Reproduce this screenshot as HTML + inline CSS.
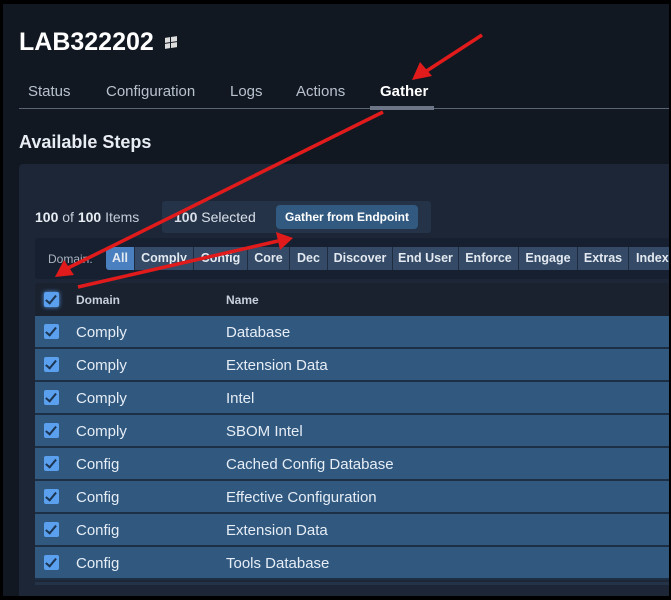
<!DOCTYPE html>
<html><head><meta charset="utf-8"><style>
*{box-sizing:border-box;margin:0;padding:0}
body{width:671px;height:600px;background:#000;font-family:"Liberation Sans",sans-serif;overflow:hidden;position:relative}
.app{position:absolute;left:3px;top:4px;width:666px;height:592px;background:#121821;overflow:hidden}
.abs{position:absolute}
.title{left:16px;top:24px;color:#fff;font-size:25px;font-weight:bold}
.tab{top:79px;color:#b8c2cf;font-size:15px}
.panel{left:16px;top:160px;width:660px;height:440px;background:#1c2636;border-radius:4px}
.chip{position:absolute;top:243px;height:23px;background:#344a66;color:#e3e9f0;font-size:12.5px;font-weight:bold;line-height:23px;text-align:center;border-right:1px solid #1f2c3d}
.row{position:absolute;left:32px;width:640px;height:33px;background:#315980;border-bottom:2px solid #1d2f45;color:#e6edf5;font-size:15px}
.cb{position:absolute;left:9px;top:8px;width:15px;height:15px;background:#5aa0ef;border-radius:2px}
.cb:after{content:"";position:absolute;left:4px;top:1px;width:4px;height:9px;border:solid #1d3550;border-width:0 2px 2px 0;transform:rotate(40deg)}
.row .d{position:absolute;left:41px;top:8px}
.row .n{position:absolute;left:191px;top:8px}
</style></head><body>
<div class="app">
<div class="abs title">LAB322202</div>
<svg class="abs" style="left:161px;top:31px" width="14" height="14" viewBox="0 0 14 14"><g fill="#ddd" transform="skewY(-8) translate(0,2)"><rect x="1" y="1" width="5" height="5"/><rect x="7" y="1" width="6" height="5"/><rect x="1" y="7" width="5" height="5"/><rect x="7" y="7" width="6" height="5"/></g></svg>
<div class="abs tab" style="left:25px">Status</div>
<div class="abs tab" style="left:103px">Configuration</div>
<div class="abs tab" style="left:227px">Logs</div>
<div class="abs tab" style="left:293px">Actions</div>
<div class="abs tab" style="left:377px;color:#fff;font-weight:bold">Gather</div>
<div class="abs" style="left:16px;top:104px;width:660px;height:1px;background:#5b6575"></div>
<div class="abs" style="left:367px;top:102px;width:64px;height:4px;background:#6c7686"></div>
<div class="abs" style="left:16px;top:128px;color:#e8edf3;font-size:18px;font-weight:bold">Available Steps</div>
<div class="abs panel"></div>
<div class="abs" style="left:32px;top:205px;color:#c3ccd8;font-size:14px"><b style="color:#e8edf3">100</b> of <b style="color:#e8edf3">100</b> Items</div>
<div class="abs" style="left:159px;top:197px;width:269px;height:32px;background:#243347;border-radius:3px"></div>
<div class="abs" style="left:171px;top:205px;color:#d9e0ea;font-size:14px"><b>100</b> Selected</div>
<div class="abs" style="left:273px;top:201px;width:142px;height:24px;background:#325a80;border-radius:4px;color:#fff;font-size:12px;font-weight:bold;line-height:24px;text-align:center">Gather from Endpoint</div>
<div class="abs" style="left:32px;top:234px;width:640px;height:41px;background:#172030;border-radius:3px"></div>
<div class="abs" style="left:45px;top:248px;color:#aab4c0;font-size:12px">Domain:</div>
<div class="chip" style="left:103px;width:29px;background:#4a80bf;border-radius:3px 0 0 3px">All</div>
<div class="chip" style="left:132px;width:59px">Comply</div>
<div class="chip" style="left:191px;width:54px">Config</div>
<div class="chip" style="left:245px;width:42px">Core</div>
<div class="chip" style="left:287px;width:38px">Dec</div>
<div class="chip" style="left:325px;width:65px">Discover</div>
<div class="chip" style="left:390px;width:66px">End User</div>
<div class="chip" style="left:456px;width:60px">Enforce</div>
<div class="chip" style="left:516px;width:59px">Engage</div>
<div class="chip" style="left:575px;width:51px">Extras</div>
<div class="chip" style="left:626px;width:50px;text-align:left;padding-left:7px">Index</div>
<div class="abs" style="left:32px;top:279px;width:640px;height:33px;background:#1a2230;border-radius:3px 3px 0 0"></div>
<div class="abs cb" style="left:41px;top:288px;box-shadow:0 0 4px #5aa0ef"></div>
<div class="abs" style="left:73px;top:289px;color:#c8d0db;font-size:12px;font-weight:bold">Domain</div>
<div class="abs" style="left:223px;top:289px;color:#c8d0db;font-size:12px;font-weight:bold">Name</div>
<div class="row" style="top:312px"><div class="cb"></div><span class="d">Comply</span><span class="n">Database</span></div>
<div class="row" style="top:345px"><div class="cb"></div><span class="d">Comply</span><span class="n">Extension Data</span></div>
<div class="row" style="top:378px"><div class="cb"></div><span class="d">Comply</span><span class="n">Intel</span></div>
<div class="row" style="top:411px"><div class="cb"></div><span class="d">Comply</span><span class="n">SBOM Intel</span></div>
<div class="row" style="top:444px"><div class="cb"></div><span class="d">Config</span><span class="n">Cached Config Database</span></div>
<div class="row" style="top:477px"><div class="cb"></div><span class="d">Config</span><span class="n">Effective Configuration</span></div>
<div class="row" style="top:510px"><div class="cb"></div><span class="d">Config</span><span class="n">Extension Data</span></div>
<div class="row" style="top:543px"><div class="cb"></div><span class="d">Config</span><span class="n">Tools Database</span></div>
<div class="abs" style="left:32px;top:578px;width:640px;height:3px;background:#243347"></div>
</div>
<svg class="abs" style="left:0;top:0" width="671" height="600">
<g stroke="#e11b1b" stroke-width="3.5" fill="#e11b1b">
<line x1="482" y1="35" x2="425" y2="72"/><polygon stroke="none" points="412,80 420,62 432,76"/>
<line x1="383" y1="112" x2="68" y2="268"/><polygon stroke="none" points="55,277 64,260 74,275"/>
<line x1="78" y1="287" x2="278" y2="241"/><polygon stroke="none" points="293,238 276,232 280,250"/>
</g></svg>
</body></html>
